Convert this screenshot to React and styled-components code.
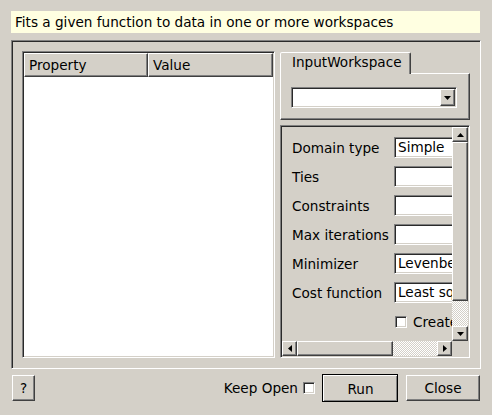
import React from 'react'
import styled, { createGlobalStyle, css } from 'styled-components'

const GlobalStyle = createGlobalStyle`
    * { box-sizing: border-box; }
    body {
        margin: 0;
        background: #d4d0c8;
        font-family: "DejaVu Sans", Verdana, sans-serif;
        font-size: 13.6px;
        color: #000;
    }
`

const sunken = css`
    border: 1px solid;
    border-color: #808080 #ffffff #ffffff #808080;
    box-shadow: inset 1px 1px 0 #2a2a2a, inset -1px -1px 0 #d4d0c8;
`

const raised = css`
    border: 1px solid;
    border-color: #ffffff #404040 #404040 #ffffff;
    box-shadow: inset -1px -1px 0 #808080;
    background: #d4d0c8;
`

const checker = css`
    background-color: #ffffff;
    background-image: conic-gradient(#d4d0c8 25%, #ffffff 0 50%, #d4d0c8 0 75%, #ffffff 0);
    background-size: 2px 2px;
`

function Arrow({ dir }) {
    const pts = {
        up: '0,4 7,4 3.5,0',
        down: '0,0 7,0 3.5,4',
        left: '4,0 4,7 0,3.5',
        right: '0,0 0,7 4,3.5',
    }[dir]
    const vertical = dir === 'up' || dir === 'down'
    return (
        <svg width={vertical ? 7 : 4} height={vertical ? 4 : 7}>
            <polygon points={pts} fill="#000" />
        </svg>
    )
}

const rows = [
    { label: 'Domain type', value: 'Simple' },
    { label: 'Ties', value: '' },
    { label: 'Constraints', value: '' },
    { label: 'Max iterations', value: '' },
    { label: 'Minimizer', value: 'Levenberg-Marquardt' },
    { label: 'Cost function', value: 'Least squares' },
]

function App() {
    return (
        <Page>
            <GlobalStyle />
            <Description>Fits a given function to data in one or more workspaces</Description>
            <Frame>
                <Table>
                    <Header>
                        <HeaderCell width={124}>Property</HeaderCell>
                        <HeaderCell grow>Value</HeaderCell>
                    </Header>
                    <TableBody />
                </Table>
                <Side>
                    <TabBar>
                        <Tab>InputWorkspace</Tab>
                    </TabBar>
                    <TabPane>
                        <Combo>
                            <ComboText />
                            <ComboButton>
                                <Arrow dir="down" />
                            </ComboButton>
                        </Combo>
                    </TabPane>
                    <ScrollArea>
                        <Viewport>
                            <Form>
                                {rows.map((r) => (
                                    <React.Fragment key={r.label}>
                                        <Label>{r.label}</Label>
                                        <Input>{r.value}</Input>
                                    </React.Fragment>
                                ))}
                                <span />
                                <CheckRow>
                                    <CheckBox />
                                    Create Output
                                </CheckRow>
                            </Form>
                        </Viewport>
                        <VScroll>
                            <ArrowButton h={15}>
                                <Arrow dir="up" />
                            </ArrowButton>
                            <Thumb style={{ height: 159 }} />
                            <Track />
                            <ArrowButton h={15}>
                                <Arrow dir="down" />
                            </ArrowButton>
                        </VScroll>
                        <HScroll>
                            <ArrowButton w={15}>
                                <Arrow dir="left" />
                            </ArrowButton>
                            <Thumb style={{ width: 96 }} />
                            <Track />
                            <ArrowButton w={15}>
                                <Arrow dir="right" />
                            </ArrowButton>
                        </HScroll>
                        <Corner />
                    </ScrollArea>
                </Side>
            </Frame>
            <ButtonBar>
                <Button width={23}>?</Button>
                <Spacer />
                <KeepOpen>
                    Keep Open
                    <CheckBox />
                </KeepOpen>
                <Button width={76} primary>Run</Button>
                <Button width={74}>Close</Button>
            </ButtonBar>
        </Page>
    )
}

export default App

const Page = styled.div`
    width: 492px;
    height: 415px;
    padding: 11px 11px 0 11px;
    display: flex;
    flex-direction: column;
`

const Description = styled.div`
    height: 22px;
    margin-bottom: 7px;
    margin-right: 1px;
    padding-left: 4px;
    line-height: 22px;
    background: #ffffe1;
    white-space: nowrap;
`

const Frame = styled.div`
    ${sunken}
    height: 329px;
    padding: 10px;
    display: flex;
    gap: 5px;
`

const Table = styled.div`
    ${sunken}
    width: 253px;
    padding: 1px;
    display: flex;
    flex-direction: column;
    background: #ffffff;
`

const Header = styled.div`
    display: flex;
    height: 24px;
    background: #d4d0c8;
`

const HeaderCell = styled.div`
    ${raised}
    width: ${(p) => (p.width ? `${p.width}px` : 'auto')};
    flex: ${(p) => (p.grow ? 1 : 'none')};
    padding-left: 4px;
    line-height: 22px;
`

const TableBody = styled.div`
    flex: 1;
    background: #ffffff;
`

const Side = styled.div`
    width: 190px;
    display: flex;
    flex-direction: column;
`

const TabBar = styled.div`
    display: flex;
    height: 22px;
    padding-top: 1px;
`

const Tab = styled.div`
    position: relative;
    z-index: 1;
    width: 131px;
    height: 22px;
    border: 1px solid;
    border-bottom: none;
    border-color: #ffffff #404040 transparent #ffffff;
    border-radius: 2px 2px 0 0;
    box-shadow: inset -1px 0 0 #808080;
    background: #d4d0c8;
    padding-left: 11px;
    line-height: 19px;
`

const TabPane = styled.div`
    ${raised}
    height: 47px;
    padding: 13px 12px 0 10px;
`

const Combo = styled.div`
    ${sunken}
    height: 21px;
    display: flex;
    padding: 1px;
    background: #ffffff;
`

const ComboText = styled.div`
    flex: 1;
`

const ComboButton = styled.div`
    ${raised}
    width: 15px;
    display: flex;
    align-items: center;
    justify-content: center;
`

const ScrollArea = styled.div`
    ${sunken}
    margin-top: 5px;
    flex: 1;
    padding: 1px;
    display: grid;
    grid-template-columns: 170px 16px;
    grid-template-rows: 1fr 15px;
`

const Viewport = styled.div`
    overflow: hidden;
    padding: 10px 0 0 10px;
`

const Form = styled.div`
    display: grid;
    grid-template-columns: 102px 90px;
    grid-auto-rows: 21px;
    row-gap: 8px;
    align-items: center;
`

const Label = styled.div`
    white-space: nowrap;
`

const Input = styled.div`
    ${sunken}
    height: 21px;
    background: #ffffff;
    padding-left: 3px;
    line-height: 19px;
    white-space: nowrap;
    overflow: hidden;
`

const CheckRow = styled.div`
    display: flex;
    align-items: center;
    gap: 6px;
    padding-left: 1px;
    white-space: nowrap;
`

const CheckBox = styled.div`
    ${sunken}
    width: 12px;
    height: 12px;
    background: #ffffff;
    flex: none;
`

const VScroll = styled.div`
    display: flex;
    flex-direction: column;
`

const HScroll = styled.div`
    display: flex;
`

const ArrowButton = styled.div`
    ${raised}
    flex: none;
    width: ${(p) => (p.w ? `${p.w}px` : 'auto')};
    height: ${(p) => (p.h ? `${p.h}px` : 'auto')};
    display: flex;
    align-items: center;
    justify-content: center;
`

const Thumb = styled.div`
    ${raised}
    flex: none;
`

const Track = styled.div`
    ${checker}
    flex: 1;
`

const Corner = styled.div`
    background: #d4d0c8;
`

const ButtonBar = styled.div`
    margin-top: 5px;
    display: flex;
    align-items: center;
    padding-right: 1px;
`

const Spacer = styled.div`
    flex: 1;
`

const KeepOpen = styled.div`
    display: flex;
    align-items: center;
    gap: 5px;
    margin-right: 7px;
`

const Button = styled.div`
    ${raised}
    width: ${(p) => p.width}px;
    height: 26px;
    display: flex;
    align-items: center;
    justify-content: center;
    margin-left: ${(p) => (p.primary ? '0' : '8px')};
    &:first-child { margin-left: 1px; }
    ${(p) =>
        p.primary &&
        css`
            height: 28px;
            outline: 1px solid #000;
            outline-offset: -1px;
            border-width: 1px 0 0 1px;
            box-shadow: inset 1px 1px 0 #ffffff, inset -2px -2px 0 #808080;
        `}
`
